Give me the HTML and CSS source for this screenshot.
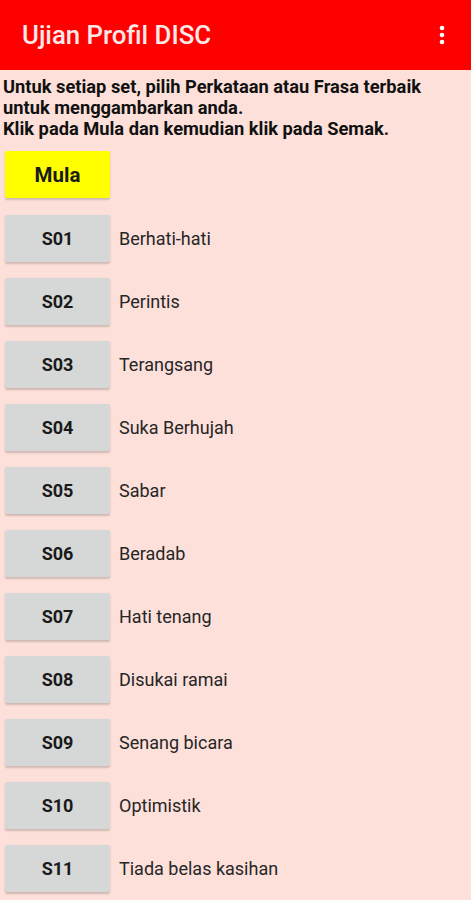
FILE: index.html
```html
<!DOCTYPE html>
<html>
<head>
<meta charset="utf-8">
<link rel="stylesheet" href="styles.css">
</head>
<body>
<header class="appbar">
  <div class="title">Ujian Profil DISC</div>
  <svg class="menu" width="6" height="20" viewBox="0 0 6 20"><circle cx="3" cy="3" r="2.3" fill="#fff"/><circle cx="3" cy="10" r="2.3" fill="#fff"/><circle cx="3" cy="17" r="2.3" fill="#fff"/></svg>
</header>
<main class="content">
  <p class="intro">Untuk setiap set, pilih Perkataan atau Frasa terbaik untuk menggambarkan anda.<br>Klik pada Mula dan kemudian klik pada Semak.</p>
  <div class="list">
    <div class="row row-start"><button class="btn btn-start">Mula</button></div>
    <div class="row"><button class="btn">S01</button><span class="label">Berhati-hati</span></div>
    <div class="row"><button class="btn">S02</button><span class="label">Perintis</span></div>
    <div class="row"><button class="btn">S03</button><span class="label">Terangsang</span></div>
    <div class="row"><button class="btn">S04</button><span class="label">Suka Berhujah</span></div>
    <div class="row"><button class="btn">S05</button><span class="label">Sabar</span></div>
    <div class="row"><button class="btn">S06</button><span class="label">Beradab</span></div>
    <div class="row"><button class="btn">S07</button><span class="label">Hati tenang</span></div>
    <div class="row"><button class="btn">S08</button><span class="label">Disukai ramai</span></div>
    <div class="row"><button class="btn">S09</button><span class="label">Senang bicara</span></div>
    <div class="row"><button class="btn">S10</button><span class="label">Optimistik</span></div>
    <div class="row"><button class="btn">S11</button><span class="label">Tiada belas kasihan</span></div>
  </div>
</main>
</body>
</html>
```
FILE: styles.css
```css
html, body {
  margin: 0;
  padding: 0;
  background: #fde0da;
  font-family: Roboto, "Liberation Sans", sans-serif;
  height: 900px;
  overflow: hidden;
}
.appbar {
  height: 70px;
  background: #ff0000;
  display: flex;
  align-items: center;
  justify-content: space-between;
  padding: 0 26px 0 22px;
}
.title {
  color: #fde8e8;
  font-size: 25.8px;
  font-weight: 500;
}
.menu {
  display: block;
}
.content {
  padding: 6px 0 0 3px;
}
.intro {
  margin: 0;
  font-size: 18.3px;
  font-weight: 700;
  line-height: 21px;
  color: #111;
}
.list {
  display: flex;
  flex-direction: column;
  gap: 16px;
  margin-top: 12px;
}
.row-start {
  margin-bottom: 1px;
}
.row {
  display: flex;
  align-items: center;
  height: 47px;
}
.btn {
  width: 105px;
  height: 47px;
  margin-left: 2px;
  border: none;
  border-radius: 2px;
  background: #d6d7d7;
  font-family: Roboto, "Liberation Sans", sans-serif;
  font-size: 18px;
  font-weight: 700;
  color: #1a1a1a;
  box-shadow: 0 1.5px 2px rgba(0,0,0,0.18);
  padding: 0;
}
.btn-start {
  background: #ffff00;
  font-size: 20.5px;
}
.label {
  margin-left: 9px;
  font-size: 18px;
  color: #262626;
}
```
